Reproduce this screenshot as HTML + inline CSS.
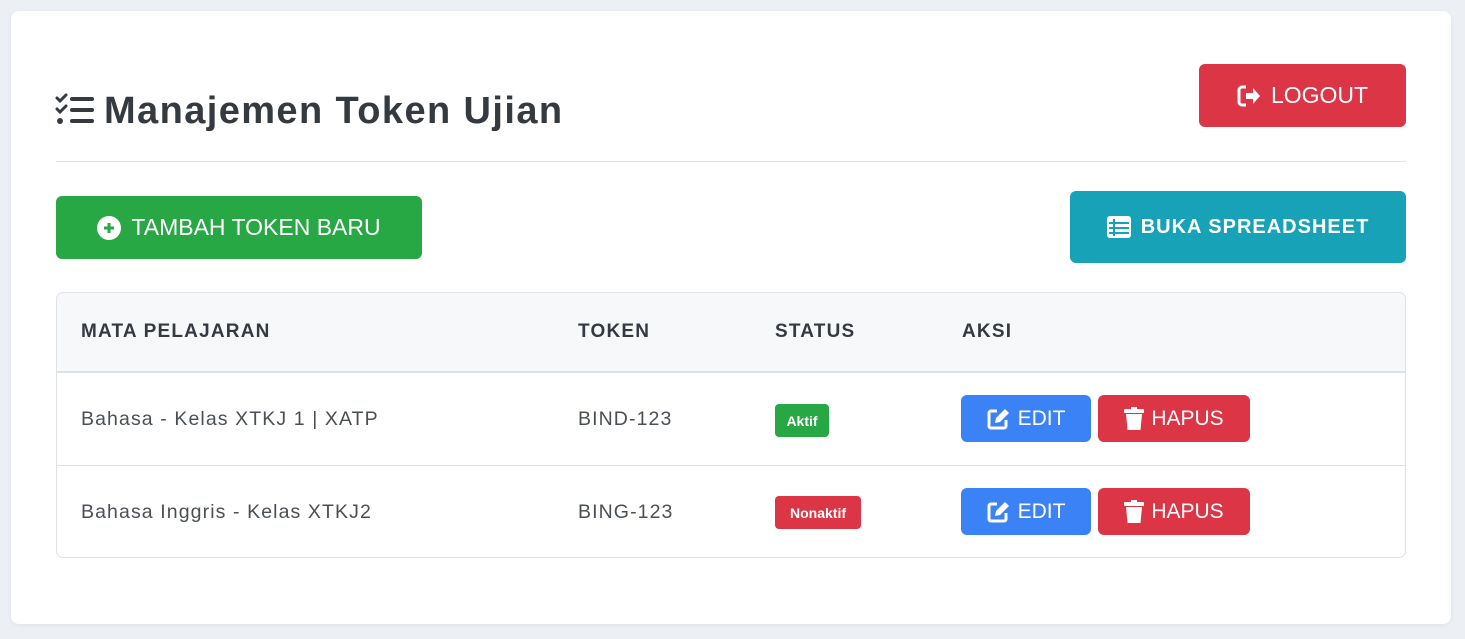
<!DOCTYPE html>
<html><head><style>
*{box-sizing:border-box;margin:0;padding:0}
body{width:1465px;height:639px;background:#eceff4;font-family:"Liberation Sans",sans-serif;position:relative;overflow:hidden}
.card{position:absolute;left:11px;top:11px;width:1440px;height:613px;background:#fff;border-radius:8px;box-shadow:0 1px 4px rgba(0,0,0,.06)}
.a{position:absolute}
.btn{position:absolute;display:flex;align-items:center;justify-content:center;color:#fff;border-radius:6px;font-size:23px;gap:10px}
.title{left:104px;top:90px;font-size:38px;font-weight:bold;color:#343a40;letter-spacing:1.4px}
.th{font-size:19px;font-weight:bold;color:#343a40;letter-spacing:1.2px;top:321px}
.td{font-size:19.5px;color:#4a4f55;letter-spacing:1.1px}
.badge{position:absolute;color:#fff;font-weight:bold;font-size:14px;border-radius:4px;display:flex;align-items:center;justify-content:center}
</style></head><body>
<div class="card"></div>
<svg class="a" style="left:55px;top:93px" width="40" height="34" viewBox="0 0 40 34"><path d="M2 5l3 3 6-6M2 16l3 3 6-6" stroke="#343a40" stroke-width="3" fill="none" stroke-linecap="round"/><circle cx="5" cy="28" r="3" fill="#343a40"/><rect x="15" y="4" width="24" height="4" rx="2" fill="#343a40"/><rect x="15" y="15" width="24" height="4" rx="2" fill="#343a40"/><rect x="15" y="26" width="24" height="4" rx="2" fill="#343a40"/></svg>
<div class="a title">Manajemen Token Ujian</div>
<div class="btn" style="left:1199px;top:64px;width:207px;height:63px;background:#dc3545"><svg width="24" height="22" viewBox="0 0 24 22"><path d="M9 2H5a3 3 0 0 0-3 3v12a3 3 0 0 0 3 3h4" stroke="#fff" stroke-width="3" fill="none"/><path d="M9 8h7V3l7 8-7 8v-5H9z" fill="#fff"/></svg>LOGOUT</div>
<div class="a" style="left:56px;top:161px;width:1350px;height:1px;background:#dee2e6"></div>
<div class="btn" style="left:56px;top:196px;width:366px;height:63px;background:#28a745"><svg width="24" height="24" viewBox="0 0 24 24"><circle cx="12" cy="12" r="12" fill="#fff"/><path d="M12 7v10M7 12h10" stroke="#28a745" stroke-width="3"/></svg>TAMBAH TOKEN BARU</div>
<div class="btn" style="left:1070px;top:191px;width:336px;height:72px;background:#17a2b8;font-weight:bold;font-size:20px;letter-spacing:1px"><svg width="24" height="22" viewBox="0 0 24 22"><rect x="0" y="0" width="24" height="22" rx="3" fill="#fff"/><path d="M2 7h20M2 12h20M2 17h20M7 3v17" stroke="#17a2b8" stroke-width="2"/></svg>BUKA SPREADSHEET</div>
<div class="a" style="left:56px;top:292px;width:1350px;height:266px;border:1px solid #dee2e6;border-radius:7px;overflow:hidden">
<div class="a" style="left:0;top:0;width:100%;height:80px;background:#f7f8fa;border-bottom:2px solid #dee2e6"></div>
<div class="a" style="left:0;top:172px;width:100%;height:1px;background:#dee2e6"></div>
</div>
<div class="a th" style="left:81px">MATA PELAJARAN</div>
<div class="a th" style="left:578px">TOKEN</div>
<div class="a th" style="left:775px">STATUS</div>
<div class="a th" style="left:962px">AKSI</div>
<div class="a td" style="left:81px;top:408px">Bahasa - Kelas XTKJ 1 | XATP</div>
<div class="a td" style="left:578px;top:408px">BIND-123</div>
<div class="badge" style="left:775px;top:404px;width:54px;height:33px;background:#28a745">Aktif</div>
<div class="a td" style="left:81px;top:501px">Bahasa Inggris - Kelas XTKJ2</div>
<div class="a td" style="left:578px;top:501px">BING-123</div>
<div class="badge" style="left:775px;top:496px;width:86px;height:33px;background:#dc3545">Nonaktif</div>
<div class="btn" style="left:961px;top:395px;width:130px;height:47px;background:#3b82f6;font-size:21px;gap:7px"><svg width="24" height="22" viewBox="0 0 24 22"><path d="M10 3H4a2 2 0 0 0-2 2v13a2 2 0 0 0 2 2h13a2 2 0 0 0 2-2v-6" stroke="#fff" stroke-width="3" fill="none"/><path d="M8 15l1-5 9-9 4 4-9 9z" fill="#fff"/></svg>EDIT</div>
<div class="btn" style="left:1098px;top:395px;width:152px;height:47px;background:#dc3545;font-size:21px;gap:7px"><svg width="20" height="24" viewBox="0 0 20 24"><rect x="0" y="2" width="20" height="4" rx="1" fill="#fff"/><rect x="7" y="0" width="6" height="3" fill="#fff"/><path d="M2 7h16l-1.5 16h-13z" fill="#fff"/></svg>HAPUS</div>
<div class="btn" style="left:961px;top:488px;width:130px;height:47px;background:#3b82f6;font-size:21px;gap:7px"><svg width="24" height="22" viewBox="0 0 24 22"><path d="M10 3H4a2 2 0 0 0-2 2v13a2 2 0 0 0 2 2h13a2 2 0 0 0 2-2v-6" stroke="#fff" stroke-width="3" fill="none"/><path d="M8 15l1-5 9-9 4 4-9 9z" fill="#fff"/></svg>EDIT</div>
<div class="btn" style="left:1098px;top:488px;width:152px;height:47px;background:#dc3545;font-size:21px;gap:7px"><svg width="20" height="24" viewBox="0 0 20 24"><rect x="0" y="2" width="20" height="4" rx="1" fill="#fff"/><rect x="7" y="0" width="6" height="3" fill="#fff"/><path d="M2 7h16l-1.5 16h-13z" fill="#fff"/></svg>HAPUS</div>
</body></html>
